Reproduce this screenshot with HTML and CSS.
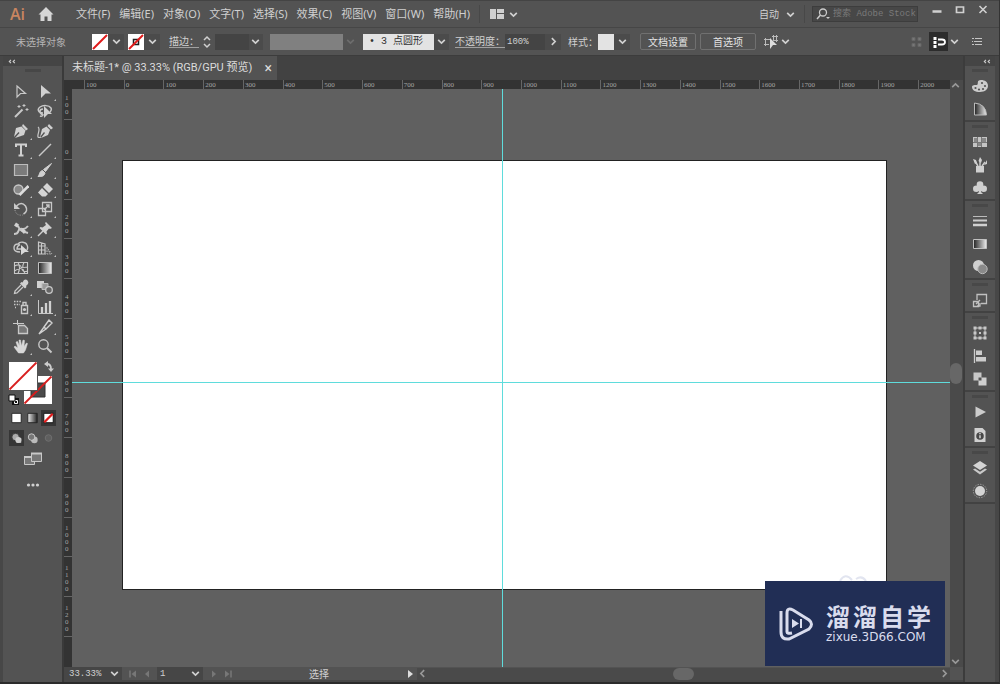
FILE: index.html
```
<!DOCTYPE html>
<html lang="zh-CN">
<head>
  <meta charset="UTF-8">
  <meta name="viewport" content="width=device-width, initial-scale=1.0">
  <title>未标题-1</title>
  <link rel="stylesheet" href="styles.css">
</head>
<body>
  <svg class="defs" aria-hidden="true">
    <symbol id="chev" viewBox="0 0 10 10"><path d="M2 3.500l3 3 3-3" fill="none" stroke="currentColor" stroke-width="1.500"/></symbol>
    <symbol id="chev-r" viewBox="0 0 10 10"><path d="M3.500 2l3 3-3 3" fill="none" stroke="currentColor" stroke-width="1.500"/></symbol>
    <symbol id="chev-l" viewBox="0 0 10 10"><path d="M6.500 2l-3 3 3 3" fill="none" stroke="currentColor" stroke-width="1.500"/></symbol>
    <symbol id="chev-u" viewBox="0 0 10 10"><path d="M2 6.500l3-3 3 3" fill="none" stroke="currentColor" stroke-width="1.500"/></symbol>
    <symbol id="collapse" viewBox="0 0 10 10"><path d="M4.500 3.500L3 5l1.500 1.500M8 3.500L6.500 5 8 6.500" fill="none" stroke="currentColor"/></symbol>
    <linearGradient id="fade"><stop offset="0" stop-color="#222"/><stop offset="1" stop-color="#eee"/></linearGradient>
    <linearGradient id="fade-back"><stop offset="0" stop-color="#eee"/><stop offset="1" stop-color="#222"/></linearGradient>
  </svg>

  <header class="menubar">
    <span class="logo">Ai</span>
    <button class="home" aria-label="主页"><svg viewBox="0 0 16 16"><path d="M8 1L.5 8.500h2V15h4v-4.500h3V15h4V8.500h2z" fill="#d6d6d6"/></svg></button>
    <nav class="menus">
      <button>文件(F)</button>
      <button>编辑(E)</button>
      <button>对象(O)</button>
      <button>文字(T)</button>
      <button>选择(S)</button>
      <button>效果(C)</button>
      <button>视图(V)</button>
      <button>窗口(W)</button>
      <button>帮助(H)</button>
    </nav>
    <button class="layout" aria-label="排列文档"><svg viewBox="0 0 16 10" class="layout-icon"><path d="M1 0h6v10H1zM8 0h7v4H8zM8 5h7v5H8z" fill="#d0d0d0"/></svg><svg class="chev"><use href="#chev"/></svg></button>
    <div class="menubar-right">
      <button class="workspace">自动 <svg class="chev"><use href="#chev"/></svg></button>
      <label class="search">
        <svg viewBox="0 0 16 12"><circle cx="8" cy="4.500" r="3.500" fill="none" stroke="#ccc" stroke-width="1.300"/><path d="M5.500 7L2 11" stroke="#ccc" stroke-width="1.500"/><path d="M11 9h4l-2 2z" fill="#ccc"/></svg>
        <input type="text" placeholder="搜索 Adobe Stock" aria-label="搜索 Adobe Stock">
      </label>
      <div class="window-buttons">
        <button aria-label="最小化"><svg viewBox="0 0 12 12"><path d="M1.500 7.500h9" stroke="#d0d0d0" stroke-width="2.500"/></svg></button>
        <button aria-label="最大化"><svg viewBox="0 0 12 12"><path d="M2.500 3h7v5.500h-7z" fill="none" stroke="#d0d0d0" stroke-width="1.700"/></svg></button>
        <button aria-label="关闭"><svg viewBox="0 0 12 12"><path d="M2.500 2l7 7M9.500 2l-7 7" stroke="#d0d0d0" stroke-width="1.600"/></svg></button>
      </div>
    </div>
  </header>

  <div class="controlbar">
    <span class="selection">未选择对象</span>
    <button class="swatch" aria-label="填色"><svg viewBox="0 0 16 16"><path d="M0 0h16v16H0z" fill="#fff"/><path d="M1 15L15 1" stroke="#e01b1b" stroke-width="2"/></svg></button>
    <button class="drop" aria-label="填色选项"><svg class="chev"><use href="#chev"/></svg></button>
    <button class="swatch" aria-label="描边颜色"><svg viewBox="0 0 16 16"><path d="M0 0h16v16H0z" fill="#fff"/><path d="M5.500 5.500h5v5h-5z" fill="none" stroke="#222" stroke-width="1.500"/><path d="M1 15L15 1" stroke="#e01b1b" stroke-width="2"/></svg></button>
    <button class="drop" aria-label="描边颜色选项"><svg class="chev"><use href="#chev"/></svg></button>
    <label class="caption underlined" for="stroke">描边：</label>
    <button class="spinner" aria-label="调整描边粗细"><svg viewBox="0 0 10 14"><path d="M2 5l3-3 3 3M2 9l3 3 3-3" fill="none" stroke="currentColor" stroke-width="1.500"/></svg></button>
    <span class="combo stroke"><select id="stroke"><option></option></select><svg class="chev"><use href="#chev"/></svg></span>
    <span class="combo profile"><select aria-label="变量宽度配置文件" disabled><option></option></select><svg class="chev"><use href="#chev"/></svg></span>
    <span class="combo brush"><select aria-label="画笔定义"><option>•&nbsp;3 点圆形</option></select><svg class="chev"><use href="#chev"/></svg></span>
    <label class="caption underlined" for="opacity">不透明度：</label>
    <input type="text" class="opacity" id="opacity" value="100%">
    <button class="drop" aria-label="不透明度选项"><svg class="chev"><use href="#chev-r"/></svg></button>
    <span class="caption">样式：</span>
    <button class="swatch style" aria-label="图形样式"></button>
    <button class="drop" aria-label="样式选项"><svg class="chev"><use href="#chev"/></svg></button>
    <button class="outlined">文档设置</button>
    <button class="outlined">首选项</button>
    <button class="similar" aria-label="选择类似的对象"><svg viewBox="0 0 16 16"><path d="M1 5.500h6M1 10.500h5M2.500 4v8M9 2.500h6M10 6.500h5M10.500 1v6M13.500 1v7" stroke="#bbb" fill="none"/><path d="M7 4l7 7h-4l-3 4z" fill="#ddd"/></svg><svg class="chev"><use href="#chev"/></svg></button>
    <div class="controlbar-right">
      <svg class="dots" viewBox="0 0 12 12"><path d="M1 1.500h3v3H1zM7 1.500h3v3H7zM1 7.500h3v3H1zM7 7.500h3v3H7z" fill="#777" stroke="#666"/></svg>
      <button class="snap" aria-label="对齐"><svg viewBox="0 0 18 18"><path d="M5 4v11" stroke="#fff" stroke-width="3" stroke-dasharray="3 1"/><path d="M8 6.500h4q3 0 3 2.500t-3 2.500H8" fill="none" stroke="#fff" stroke-width="1.800"/></svg></button>
      <button class="drop" aria-label="对齐选项"><svg class="chev"><use href="#chev"/></svg></button>
      <button class="list" aria-label="面板菜单"><svg viewBox="0 0 12 10"><path d="M1 1.500h2M4 1.500h7M1 4.500h1M3 4.500h8M1 7.500h2M4 7.500h7" stroke="#c5c5c5" stroke-width="1.200"/></svg></button>
    </div>
  </div>

  <main class="workspace-area">
    <aside class="tools">
      <div class="panel-head"><svg class="chev"><use href="#collapse"/></svg></div>
      <div class="grip"></div>
      <div class="tool-grid">
        <button aria-label="选择工具"><svg viewBox="0 0 16 16"><path d="M4 2l8.500 7.500H7.500L4 13z" fill="none" stroke="#c8c8c8" stroke-width="1.200"/></svg></button>
        <button class="more" aria-label="直接选择工具"><svg viewBox="0 0 16 16"><path d="M4 1l10 8.500H8.500L4 14z" fill="#d0d0d0"/></svg></button>
        <button aria-label="魔棒工具"><svg viewBox="0 0 16 16"><path d="M2 14l7.500-7.500" stroke="#c8c8c8" stroke-width="2"/><path d="M11 1v3M9.500 2.500h3M14 5v3M12.500 6.500h3M6 2v3M4.500 3.500h3" stroke="#c8c8c8"/></svg></button>
        <button aria-label="套索工具"><svg viewBox="0 0 16 16"><path d="M6 10C1 10 0 6 3 4s9-2 11 1c1 2 0 3-1 4M6 6q-3 0-3 2.500T6 12q-1 2-3 1" fill="none" stroke="#c8c8c8" stroke-width="1.500"/><path d="M7 3l8 8h-4l-4 4z" fill="#d0d0d0"/></svg></button>
        <button class="more" aria-label="钢笔工具"><svg viewBox="0 0 16 16"><path d="M10 1l5 5-2 1.500L9 3zM8.500 3.500l4 4L11 12l-9 3 4.500-5L5.500 9 1 14l2-9z" fill="#d0d0d0"/></svg></button>
        <button aria-label="曲率工具"><svg viewBox="0 0 16 16"><path d="M12 1l4 4-2 1.500-3.500-3.500zM9.500 3.500l3.500 3.500-2 5L4 15l4-5-1-1-4 5 2-8z" fill="#d0d0d0"/><path d="M1 4c3 2-1 7 0 10q1 1 3 0" fill="none" stroke="#c8c8c8" stroke-width="1.200"/></svg></button>
        <button class="more" aria-label="文字工具"><svg viewBox="0 0 16 16"><path d="M3 5V2.500h10V5M8 2.500v11M5.500 13.500h5" fill="none" stroke="#d0d0d0" stroke-width="2"/></svg></button>
        <button class="more" aria-label="直线段工具"><svg viewBox="0 0 16 16"><path d="M2 14L14 2" stroke="#c8c8c8" stroke-width="1.500"/></svg></button>
        <button class="more" aria-label="矩形工具"><svg viewBox="0 0 16 16"><path d="M1.500 2.500h13v11h-13z" fill="#7b7b7b" stroke="#bcbcbc" stroke-width="1.200"/></svg></button>
        <button class="more" aria-label="画笔工具"><svg viewBox="0 0 16 16"><path d="M14.500 1.500l-6 8-2-2zM5.500 8.500l2.500 2.500c-1 4-4 3.500-7 3.500 2-2 1-5 4.500-6z" fill="#d0d0d0" stroke="#d0d0d0"/></svg></button>
        <button class="more" aria-label="Shaper 工具"><svg viewBox="0 0 16 16"><circle cx="5.500" cy="7.500" r="4.500" fill="#888" stroke="#c8c8c8" stroke-width="1.300"/><path d="M6.500 13L15.500 4" stroke="#ddd" stroke-width="2.600"/></svg></button>
        <button class="more" aria-label="橡皮擦工具"><svg viewBox="0 0 16 16"><path d="M10 1l6 6-4 4-6-6zM5 6l6 6-2.500 2.500H5L1 10.500z" fill="#d4d4d4"/></svg></button>
        <button class="more" aria-label="旋转工具"><svg viewBox="0 0 16 16"><path d="M3.500 5q5-5 9 0 3 5-2 8" fill="none" stroke="#c8c8c8" stroke-width="1.500"/><path d="M1 2v6h6z" fill="#c8c8c8"/><path d="M2 9q1 6 8 5" fill="none" stroke="#aaa" stroke-dasharray="1 1.500"/></svg></button>
        <button class="more" aria-label="比例缩放工具"><svg viewBox="0 0 16 16"><path d="M5.500 1.500h9v9h-9zM1.500 7.500h7v7h-7z" fill="none" stroke="#c8c8c8" stroke-width="1.300"/><path d="M7 9l5-5M9 4h3v3" fill="none" stroke="#c8c8c8" stroke-width="1.300"/></svg></button>
        <button class="more" aria-label="宽度工具"><svg viewBox="0 0 16 16"><path d="M1 13c6 0 3-4 6-5s4 2 8-3M2 4q3 0 4 3t9 5" fill="none" stroke="#c8c8c8" stroke-width="2"/><path d="M3 1.500l3 2-2 3-3-2zM10 7l3 3-2 3-3-3z" fill="#d0d0d0"/></svg></button>
        <button class="more" aria-label="操控变形工具"><svg viewBox="0 0 16 16"><path d="M9 1l6 6-2 1-1-.500-2.500 3 .500 2-1 1L2.500 7l1-1 2 .500L9 4 8 2z" fill="#d0d0d0"/><path d="M6 10l-5 5" stroke="#d0d0d0" stroke-width="1.500"/></svg></button>
        <button class="more" aria-label="形状生成器工具"><svg viewBox="0 0 16 16"><path d="M5 4C2 4 1 6 1 8s2 4 6 4M5 4c2-3 8-2 9 1 1 2 1 3 0 5M7 4.500C4 6 4 8 4 9h4" fill="none" stroke="#c8c8c8" stroke-width="1.400"/><path d="M8 5l8 7h-4l-4 3z" fill="#d8d8d8"/></svg></button>
        <button class="more" aria-label="透视网格工具"><svg viewBox="0 0 16 16"><path d="M1.500 2v12H8V4zM4.500 3v11M1.500 6H8M1.500 10H8" fill="none" stroke="#c8c8c8" stroke-width="1.200"/><path d="M8 5l7 9H8M10 8v6M12.500 11v3M8 11h5" fill="none" stroke="#aaa" stroke-dasharray="1.500 1"/></svg></button>
        <button aria-label="网格工具"><svg viewBox="0 0 16 16"><path d="M1.500 2.500h13v11h-13zM1.500 6q6-3 7 2t6 3M5 2.500q3 5 0 11M11 2.500q-3 5 1 11M1.500 11q4-3 13-4" fill="none" stroke="#c8c8c8" stroke-width="1.100"/></svg></button>
        <button aria-label="渐变工具"><svg viewBox="0 0 16 16"><path d="M1.500 2.500h13v11h-13z" fill="url(#fade)" stroke="#c0c0c0"/></svg></button>
        <button class="more" aria-label="吸管工具"><svg viewBox="0 0 16 16"><path d="M11 1q2-1 3.500.500T15 5l-2 2 .500 1-1.500 1.500-5-5L8.500 3l1 .500z" fill="#d0d0d0"/><path d="M8 6L2 12l-.500 2.500L4 14l6-6" fill="none" stroke="#c8c8c8" stroke-width="1.300"/></svg></button>
        <button aria-label="混合工具"><svg viewBox="0 0 16 16"><path d="M0 2h7v7H0z" fill="#d0d0d0"/><path d="M5 4.500h6v6H5z" fill="#999" stroke="#bbb"/><circle cx="12" cy="11" r="3.300" fill="#666" stroke="#c8c8c8" stroke-width="1.300"/></svg></button>
        <button class="more" aria-label="符号喷枪工具"><svg viewBox="0 0 16 16"><path d="M8.500 6.500h6v8h-6zM10 3.500h3v3h-3z" fill="none" stroke="#c8c8c8" stroke-width="1.400"/><circle cx="11.500" cy="10.500" r="1.600" fill="#ccc"/><path d="M1 2.500h7M1 5.500h6M2 8.500h1" stroke="#c8c8c8" stroke-dasharray="1.500 1.200" stroke-width="1.500"/></svg></button>
        <button class="more" aria-label="柱形图工具"><svg viewBox="0 0 16 16"><path d="M1.500 1v13.500H16" fill="none" stroke="#c8c8c8"/><path d="M5 8v6M9 4v10M13 2v12" stroke="#d0d0d0" stroke-width="2.300"/></svg></button>
        <button aria-label="画板工具"><svg viewBox="0 0 16 16"><path d="M0 4.500h11M4.500 1v5" stroke="#c8c8c8"/><path d="M5.500 6.500h6l3 3v5h-9z" fill="#777" stroke="#c8c8c8" stroke-width="1.300"/></svg></button>
        <button class="more" aria-label="切片工具"><svg viewBox="0 0 16 16"><path d="M12 1l3 3-6 6-2-2zM7 8l2 2-7 5z" fill="none" stroke="#d0d0d0" stroke-width="1.400"/></svg></button>
        <button class="more" aria-label="抓手工具"><svg viewBox="0 0 16 16"><path d="M5.500 15L1 9l1-1 3 2-2-6 1.500-.500L6.500 8 6 2h1.500l1 6L10 2l1.500.500L11 8.500 13.500 5l1 .500L12.500 12l-2 3z" fill="#d8d8d8" stroke="#d8d8d8" stroke-width=".500"/></svg></button>
        <button aria-label="缩放工具"><svg viewBox="0 0 16 16"><circle cx="6.500" cy="6.500" r="4.700" fill="none" stroke="#c8c8c8" stroke-width="1.400"/><path d="M10 10l4.500 4.500" stroke="#c8c8c8" stroke-width="2"/></svg></button>
      </div>
      <button class="fill-stroke" aria-label="填色和描边">
        <svg viewBox="0 0 48 48">
          <path d="M16 18h28v28H16z" fill="#fff"/><path d="M23 25h14v14H23z" fill="#4a4a4a" stroke="#333"/>
          <path d="M16.500 45.500l27-27" stroke="#d81e1e" stroke-width="1.800"/>
          <path d="M0 3h30v30H0z" fill="#535353"/><path d="M1 4h28v28H1z" fill="#fff"/><path d="M1.500 31.500l27-27" stroke="#d81e1e" stroke-width="1.800"/>
          <path d="M39 6q4 0 4 5" fill="none" stroke="#ccc" stroke-width="1.800"/><path d="M36 6l4-3v6zM40 10.500h6l-3 3.500z" fill="#ccc"/>
          <path d="M4 40h7v7H4z" fill="#111"/><path d="M6.500 42.500h3v3h-3z" fill="none" stroke="#fff"/><path d="M1 37h6v6H1z" fill="#fff" stroke="#111"/>
        </svg>
      </button>
      <div class="tool-row">
        <button aria-label="颜色"><svg viewBox="0 0 16 16"><path d="M3 3h10v10H3z" fill="#fff" stroke="#222"/></svg></button>
        <button aria-label="渐变"><svg viewBox="0 0 16 16"><path d="M3 3h10v10H3z" fill="url(#fade-back)" stroke="#222"/></svg></button>
        <button class="on" aria-label="无"><svg viewBox="0 0 16 16"><path d="M3 3h10v10H3z" fill="#fff" stroke="#111"/><path d="M3.500 12.500l9-9" stroke="#e01b1b" stroke-width="2.500"/></svg></button>
      </div>
      <div class="tool-row modes">
        <button class="on" aria-label="正常绘图"><svg viewBox="0 0 16 16"><path d="M8 8h5v5H8z" fill="#ddd"/><circle cx="7" cy="7" r="4" fill="#aaa" stroke="#333"/><circle cx="10" cy="10" r="3.200" fill="#ccc"/></svg></button>
        <button aria-label="背面绘图"><svg viewBox="0 0 16 16"><circle cx="10" cy="10" r="3.500" fill="#bbb"/><circle cx="7" cy="7" r="3.500" fill="#777" stroke="#ccc"/></svg></button>
        <button aria-label="内部绘图" disabled><svg viewBox="0 0 16 16"><circle cx="8" cy="8" r="3.500" fill="#5f5f5f" stroke="#707070"/></svg></button>
      </div>
      <button class="screen-mode" aria-label="更改屏幕模式"><svg viewBox="0 0 20 16"><path d="M1.500 5.500h10v8h-10z" fill="#777" stroke="#c8c8c8"/><path d="M1 5h11v2H1z" fill="#c8c8c8"/><path d="M8.500 2.500h10v8h-10z" fill="#777" stroke="#c8c8c8"/><path d="M8 1.500h11v2H8z" fill="#c8c8c8"/></svg></button>
      <button class="edit-toolbar" aria-label="编辑工具栏"><svg viewBox="0 0 20 8"><g fill="#d0d0d0"><circle cx="5.500" cy="4" r="1.600"/><circle cx="10" cy="4" r="1.600"/><circle cx="14.500" cy="4" r="1.600"/></g></svg></button>
    </aside>

    <section class="document">
      <div class="tabs">
        <div class="tab"><span>未标题-1* @ 33.33% (RGB/GPU 预览)</span><button aria-label="关闭文档">×</button></div>
      </div>
      <div class="view">
        <div class="corner"></div>
        <div class="ruler-x" id="rulerX"></div>
        <div class="ruler-y" id="rulerY"></div>
        <div class="canvas">
          <div class="artboard"></div>
          <div class="guide guide-x"></div>
          <div class="guide guide-y"></div>
          <svg class="cloud" viewBox="0 0 36 6"><path d="M3 6q5-9 12-1M19 4q6-4 10 2" fill="none" stroke="#e2e5f0" stroke-width="2"/></svg>
          <div class="watermark">
            <svg viewBox="0 0 36 38"><path d="M2 6v21q0 8 8 7l20-10q5-5 0-9L14 5Q8 2 8 8v19q0 2 5 1" fill="none" stroke="#d9dced" stroke-width="3"/><path d="M13 14v9l7-4.500zM21 14h2v9h-2z" fill="#d9dced"/></svg>
            <div class="brand">
              <div class="brand-name"><b>溜</b><b>溜</b><b>自</b><b>学</b></div>
              <div class="brand-url">zixue.3D66.COM</div>
            </div>
          </div>
        </div>
        <div class="scroll-y">
          <svg class="chev"><use href="#chev-u"/></svg>
          <div class="thumb"></div>
          <svg class="chev"><use href="#chev"/></svg>
        </div>
      </div>
      <footer class="statusbar">
        <span class="combo zoom"><select aria-label="缩放级别"><option>33.33%</option></select><svg class="chev"><use href="#chev"/></svg></span>
        <button class="step" aria-label="首项" disabled><svg viewBox="0 0 10 10"><path d="M2 1.500v7" stroke="#777" stroke-width="1.500"/><path d="M8 1.500v7L3.500 5z" fill="#777"/></svg></button>
        <button class="step" aria-label="上一项" disabled><svg viewBox="0 0 10 10"><path d="M7 1.500v7L3 5z" fill="#777"/></svg></button>
        <span class="combo page"><select aria-label="画板"><option>1</option></select><svg class="chev"><use href="#chev"/></svg></span>
        <button class="step" aria-label="下一项" disabled><svg viewBox="0 0 10 10"><path d="M3 1.500v7L7 5z" fill="#777"/></svg></button>
        <button class="step" aria-label="末项" disabled><svg viewBox="0 0 10 10"><path d="M8 1.500v7" stroke="#777" stroke-width="1.500"/><path d="M2 1.500v7L6.500 5z" fill="#777"/></svg></button>
        <span class="status-text">选择</span>
        <button class="step" aria-label="状态栏选项"><svg viewBox="0 0 10 10"><path d="M3 1v8l5-4z" fill="#ddd"/></svg></button>
        <div class="scroll-x">
          <svg class="chev"><use href="#chev-l"/></svg>
          <div class="thumb"></div>
          <svg class="chev"><use href="#chev-r"/></svg>
        </div>
      </footer>
    </section>

    <aside class="panels">
      <div class="panel-head"><svg class="chev"><use href="#collapse"/></svg></div>
      <div class="group">
        <button aria-label="颜色"><svg viewBox="0 0 16 16"><path d="M9 2c4 0 7 2 7 6 0 3-3 6-8 6s-8-2-8-5c0-2 3-2 5-2 2-1-1-5 4-5z" fill="#ccc"/><g fill="#535353"><circle cx="10" cy="5" r="1.100"/><circle cx="13" cy="8" r="1.100"/><circle cx="11" cy="11" r="1.100"/><circle cx="7" cy="11.500" r="1.100"/><circle cx="3.500" cy="10" r="1.100"/></g></svg></button>
        <button aria-label="颜色参考"><svg viewBox="0 0 16 16"><path d="M2.500 2Q14 3 14.500 14h-12z" fill="url(#fade)" stroke="#bbb"/></svg></button>
      </div>
      <div class="group">
        <button aria-label="色板"><svg viewBox="0 0 16 16"><path d="M1 3h14v10H1z" fill="#c4c4c4"/><path d="M2 4h3v4H2zM10 4h4v4h-4zM6 9h3v3H6z" fill="#888"/><path d="M5.500 3v10M9.500 3v10M1 8.500h14" stroke="#777"/></svg></button>
        <button aria-label="画笔"><svg viewBox="0 0 16 16"><path d="M4 9h8v6.500H4z" fill="#d0d0d0"/><path d="M6 9L3 4M8 9V4M10 9l3-4" stroke="#ccc" stroke-width="1.500"/><path d="M1 2l3 1 1 3-2 1zM6.500 4L8 0l2 3-1 3zM15 3v4l-3 1z" fill="#d0d0d0"/></svg></button>
        <button aria-label="符号"><svg viewBox="0 0 16 16"><g fill="#d0d0d0"><circle cx="8" cy="4.500" r="3.300"/><circle cx="4.300" cy="8.800" r="3.300"/><circle cx="11.700" cy="8.800" r="3.300"/><path d="M7 7h2v5l2 2H5l2-2z"/></g></svg></button>
      </div>
      <div class="group">
        <button aria-label="描边"><svg viewBox="0 0 16 16"><path d="M1 3.500h14" stroke="#bbb"/><path d="M1 7.500h14" stroke="#ccc" stroke-width="2"/><path d="M1 12h14" stroke="#d0d0d0" stroke-width="2.500"/></svg></button>
        <button aria-label="渐变"><svg viewBox="0 0 16 16"><path d="M1.500 3.500h13v9h-13z" fill="url(#fade)" stroke="#c0c0c0"/></svg></button>
        <button aria-label="透明度"><svg viewBox="0 0 16 16"><circle cx="6.500" cy="6.500" r="5.500" fill="#d0d0d0"/><circle cx="10.500" cy="10" r="4.700" fill="#8a8a8a" stroke="#bbb"/></svg></button>
      </div>
      <div class="group">
        <button aria-label="资源导出"><svg viewBox="0 0 16 16"><path d="M5 8V2.500h9.500v9H9" fill="none" stroke="#c0c0c0" stroke-width="1.300"/><path d="M1.500 9.500h5v5h-5zM4 12l4-4M8 11v3H5" fill="none" stroke="#c0c0c0" stroke-width="1.300"/></svg></button>
      </div>
      <div class="group">
        <button aria-label="变换"><svg viewBox="0 0 16 16"><path d="M3 3h10v10H3z" fill="none" stroke="#c0c0c0"/><path d="M1.500 1.500h3v3h-3zM6.500 1.500h3v3h-3zM11.500 1.500h3v3h-3zM1.500 6.500h3v3h-3zM11.500 6.500h3v3h-3zM1.500 11.500h3v3h-3zM6.500 11.500h3v3h-3zM11.500 11.500h3v3h-3zM7 7h2v2H7z" fill="#c8c8c8"/></svg></button>
        <button aria-label="对齐"><svg viewBox="0 0 16 16"><path d="M2.500 1v14" stroke="#ccc" stroke-width="1.300"/><path d="M4 2.500h6v4.500H4zM4 9h10v4.500H4z" fill="#ccc"/></svg></button>
        <button aria-label="路径查找器"><svg viewBox="0 0 16 16"><path d="M1.500 1.500h8v8h-8z" fill="#c8c8c8"/><path d="M6.500 6.500h8v8h-8z" fill="#d0d0d0"/><path d="M6.500 6.500h3v3h-3z" fill="#535353"/></svg></button>
      </div>
      <div class="group">
        <button aria-label="动作"><svg viewBox="0 0 16 16"><path d="M3.500 2.500v11L14 8z" fill="#ccc"/></svg></button>
        <button aria-label="文档信息"><svg viewBox="0 0 16 16"><path d="M2.500 1h8l3 3v11h-11z" fill="#d0d0d0"/><circle cx="8" cy="9" r="3.800" fill="#484848"/><path d="M8 6v1.300M8 8.300v3" stroke="#ddd" stroke-width="1.400"/></svg></button>
      </div>
      <div class="group">
        <button aria-label="图层"><svg viewBox="0 0 16 16"><path d="M8 1l7 4.500L8 10 1 5.500z" fill="#d4d4d4"/><path d="M1 9.500l2-1 5 3.200 5-3.200 2 1L8 14.500z" fill="#c8c8c8"/></svg></button>
        <button aria-label="外观"><svg viewBox="0 0 16 16"><circle cx="8" cy="8" r="5" fill="#d4d4d4"/><circle cx="8" cy="8" r="6.700" fill="none" stroke="#aaa" stroke-dasharray="1.200 1.430"/></svg></button>
      </div>
    </aside>
  </main>

  <script>
    const rulerX = document.getElementById('rulerX');
    const rulerY = document.getElementById('rulerY');

    const addMark = (ruler, value) => {
      const mark = document.createElement('span');
      mark.textContent = value;
      ruler.appendChild(mark);
    };

    addMark(rulerX, '');
    for (let v = -100; v <= 2000; v += 100) {
      addMark(rulerX, Math.abs(v));
    }

    for (let v = -100; v <= 1200; v += 100) {
      addMark(rulerY, Math.abs(v));
    }
    addMark(rulerY, '');
  </script>
</body>
</html>
```
FILE: styles.css
```
* {
  box-sizing: border-box;
}

body {
  display: flex;
  flex-direction: column;
  height: 100vh;
  margin: 0;
  overflow: hidden;
  font-family: "Noto Sans", "Noto Sans CJK SC", sans-serif;
  font-size: 10px;
  line-height: 14px;
  color: #d0d0d0;
  background: #535353;
  border-bottom: 2px solid #2b2b2b;
  border-right: 1px solid #333;
}

button,
input,
select {
  margin: 0;
  padding: 0;
  border: 0;
  font: inherit;
  color: inherit;
  background: none;
  appearance: none;
}

button {
  display: flex;
  align-items: center;
  justify-content: center;
}

.defs {
  position: absolute;
  width: 0;
  height: 0;
}

.chev {
  flex: none;
  width: 11px;
  height: 11px;
}

/* menu bar */
.menubar {
  flex: none;
  display: flex;
  align-items: center;
  height: 28px;
  padding-left: 10px;
  border-top: 1px solid #444;
  border-bottom: 1px solid #464646;
}

.logo {
  width: 28px;
  font-family: "Open Sans", sans-serif;
  font-size: 16px;
  font-weight: 600;
  color: #c98560;
}

.home {
  width: 16px;
  height: 16px;
}

.menus {
  display: flex;
  margin-left: 22px;
  gap: 9px;
  font-size: 11px;
}

.menus button,
.workspace {
  white-space: nowrap;
}

.layout {
  gap: 3px;
  height: 18px;
  margin-left: 9px;
  padding-left: 9px;
  border-left: 1px solid #484848;
}

.layout-icon {
  width: 16px;
  height: 10px;
}

.menubar-right {
  display: flex;
  align-items: center;
  margin-left: auto;
}

.workspace {
  gap: 6px;
  height: 18px;
  padding-right: 8px;
  border-right: 1px solid #484848;
}

.search {
  display: flex;
  align-items: center;
  width: 106px;
  height: 16px;
  margin-left: 7px;
  padding-left: 2px;
  background: #474747;
  border: 1px solid #3d3d3d;
}

.search svg {
  flex: none;
  width: 16px;
  height: 12px;
}

.search input {
  width: 100%;
  min-width: 0;
  padding-left: 2px;
  font-family: "Liberation Mono", "Noto Sans CJK SC", monospace;
  font-size: 9px;
}

.search input::placeholder {
  color: #7a7a7a;
}

.window-buttons {
  display: flex;
  gap: 11px;
  margin: 0 10px 8px 13px;
}

.window-buttons button,
.window-buttons svg {
  width: 12px;
  height: 12px;
}

/* control bar */
.controlbar {
  flex: none;
  display: flex;
  align-items: center;
  height: 28px;
  padding-left: 16px;
  border-bottom: 1px solid #3c3c3c;
}

.selection {
  width: 76px;
  color: #b5b5b5;
}

.swatch {
  width: 16px;
  height: 16px;
}

.swatch.style {
  background: #e3e3e3;
}

.drop {
  width: 16px;
  height: 16px;
  margin-right: 4px;
  background: #4b4b4b;
}

.caption {
  margin-left: 3px;
  white-space: nowrap;
}

.underlined {
  border-bottom: 1px solid #a0a0a0;
  margin-left: 5px;
  line-height: 12px;
}

.drop + .underlined {
  margin-left: 5px;
}

.spinner {
  width: 16px;
  height: 16px;
}

.spinner svg {
  width: 10px;
  height: 14px;
}

.combo {
  position: relative;
  display: flex;
  align-items: center;
}

.combo select {
  width: 100%;
  height: 16px;
}

.combo .chev {
  position: absolute;
  right: 2px;
  pointer-events: none;
}

.stroke {
  width: 48px;
  background: linear-gradient(to right, #444 34px, #4b4b4b 34px);
}

.profile {
  width: 88px;
  margin-left: 7px;
  color: #6d6d6d;
  background: linear-gradient(to right, #808080 73px, #535353 73px);
}

.brush {
  width: 86px;
  margin-left: 5px;
  background: linear-gradient(to right, #e3e3e3 71px, #4b4b4b 71px);
}

.brush select {
  padding-left: 6px;
  color: #333;
}

.brush select,
.statusbar select,
.opacity {
  font-family: "Liberation Mono", "Noto Sans CJK SC", monospace;
}

.brush + .underlined {
  margin-left: 6px;
}

.opacity {
  width: 40px;
  height: 16px;
  padding-left: 2px;
  font-size: 9px;
  background: #444;
}

.outlined {
  width: 56px;
  height: 17px;
  margin-left: 4px;
  color: #e4e4e4;
  border: 1px solid #707070;
  border-radius: 2px;
}

.drop + .outlined {
  margin-left: 6px;
}

.similar {
  gap: 1px;
  margin-left: 7px;
}

.similar svg:first-child {
  width: 16px;
  height: 16px;
}

.controlbar-right {
  display: flex;
  align-items: center;
  margin-left: auto;
  padding-right: 16px;
}

.controlbar-right .drop {
  width: 12px;
  background: none;
}

.dots {
  width: 12px;
  height: 12px;
  margin-right: 6px;
}

.snap {
  width: 19px;
  height: 19px;
  background: #2c2c2c;
}

.snap svg {
  width: 18px;
  height: 18px;
}

.list {
  width: 12px;
  height: 10px;
  margin-left: 7px;
}

/* work area */
.workspace-area {
  flex: 1;
  display: flex;
  min-height: 0;
}

.panel-head {
  flex: none;
  display: flex;
  align-items: center;
  height: 10px;
  padding: 0 3px;
  background: #454545;
}

.tools {
  flex: none;
  display: flex;
  flex-direction: column;
  width: 64px;
  border-left: 3px solid #474747;
  border-right: 2px solid #3a3a3a;
}

.grip {
  width: 16px;
  height: 3px;
  margin: 3px auto 0;
  background: #474747;
}

.tool-grid {
  display: grid;
  grid-template-columns: 24px 24px;
  grid-template-rows: repeat(14, 1fr);
  height: 274px;
  margin: 10px 0 0 6px;
}

.tool-grid button {
  position: relative;
}

.tool-grid svg {
  width: 16px;
  height: 16px;
}

/* small triangle: more tools behind this one */
.tool-grid .more::after {
  content: "";
  position: absolute;
  right: 1px;
  bottom: 1px;
  border: 1px solid #c0c0c0;
  border-top-color: transparent;
  border-left-color: transparent;
}

.fill-stroke {
  width: 48px;
  height: 48px;
  margin: 2px 0 0 5px;
}

.fill-stroke svg {
  width: 48px;
  height: 48px;
}

.tool-row {
  display: flex;
  gap: 1px;
  margin: 4px 0 0 6px;
}

.tool-row button {
  width: 15px;
  height: 16px;
}

.tool-row svg {
  width: 15px;
  height: 16px;
}

.tool-row .on {
  background: #363636;
}

.screen-mode {
  margin-top: 5px;
  height: 16px;
}

.screen-mode svg {
  width: 20px;
  height: 16px;
}

.edit-toolbar {
  margin-top: 14px;
}

.edit-toolbar svg {
  width: 20px;
  height: 8px;
}

.document {
  flex: 1;
  display: flex;
  flex-direction: column;
  min-width: 0;
}

.tabs {
  flex: none;
  display: flex;
  height: 24px;
  background: #424242;
}

.tab {
  display: flex;
  align-items: center;
  gap: 11px;
  padding: 0 4px 0 8px;
  background: #535353;
  font-family: Roboto, "Noto Sans CJK SC", sans-serif;
  font-size: 11px;
  color: #dcdcdc;
}

.tab button {
  width: 10px;
  font-size: 14px;
}

.view {
  flex: 1;
  display: grid;
  grid-template-columns: 8px 1fr 13px;
  grid-template-rows: 9px 1fr;
  min-height: 0;
}

.corner,
.ruler-x,
.ruler-y {
  background: #333;
}

.ruler-x,
.ruler-y {
  font-family: "Liberation Serif", serif;
  font-size: 7px;
  color: #a5a5a5;
  overflow: hidden;
}

.ruler-x {
  display: grid;
  grid-template-columns: 12px repeat(21, 10fr) 8fr;
}

.ruler-x span {
  min-width: 0;
  padding-left: 1px;
  line-height: 11px;
  border-left: 1px solid #666;
  background: repeating-linear-gradient(to right, transparent 0 9%, #4c4c4c 9% 10%) bottom / 100% 2px no-repeat;
}

.ruler-x span:first-child {
  border-left: 0;
}

.ruler-y {
  grid-row: 2;
  display: grid;
  grid-template-rows: 31px repeat(13, 1fr) 30px;
}

.ruler-y span {
  display: flex;
  align-items: flex-end;
  width: 8px;
  min-height: 0;
  padding: 0 3px 3px 1px;
  line-height: 7px;
  word-break: break-all;
  border-bottom: 1px solid #666;
}

.ruler-y span:last-child {
  border-bottom: 0;
}

.canvas {
  position: relative;
  grid-row: 2;
  grid-column: 2;
  overflow: hidden;
  background: #606060;
}

.artboard {
  position: absolute;
  left: 50px;
  right: 63px;
  top: 71px;
  bottom: 77px;
  background: #fff;
  border: 1px solid #222;
}

.guide {
  position: absolute;
  background: #5fdcdc;
}

.guide-x {
  left: 49%;
  top: 0;
  bottom: 0;
  width: 1px;
}

.guide-y {
  top: 293px;
  left: 0;
  right: 0;
  height: 1px;
}

.cloud {
  position: absolute;
  right: 77px;
  bottom: 86px;
  width: 36px;
  height: 6px;
}

.watermark {
  position: absolute;
  right: 5px;
  bottom: 1px;
  display: flex;
  align-items: center;
  gap: 11px;
  width: 180px;
  height: 85px;
  padding-left: 14px;
  color: #d9dced;
  background: #212e55;
}

.watermark svg {
  width: 36px;
  height: 38px;
}

.brand-name {
  display: flex;
  gap: 3px;
  font-size: 24px;
  line-height: 26px;
}

.brand-url {
  font-family: "DejaVu Sans", sans-serif;
  font-size: 12px;
  line-height: 14px;
}

.scroll-y {
  grid-row: 1 / 3;
  grid-column: 3;
  display: flex;
  flex-direction: column;
  justify-content: space-between;
  color: #999;
  background: #4a4a4a;
}

.thumb {
  background: #676767;
  border-radius: 6px;
}

.scroll-y .thumb {
  width: 12px;
  height: 21px;
}

.statusbar {
  flex: none;
  display: flex;
  align-items: center;
  height: 15px;
  padding-right: 13px;
  border-bottom: 2px solid #474747;
}

.statusbar .combo select {
  height: 13px;
  font-size: 9px;
}

.zoom {
  width: 58px;
  background: #464646;
}

.zoom select {
  padding-left: 5px;
}

.page {
  width: 46px;
  margin-left: 3px;
  background: #464646;
}

.page select {
  padding-left: 3px;
}

.step {
  width: 14px;
  height: 12px;
}

.zoom + .step,
.page + .step {
  margin-left: 4px;
}

.step svg {
  width: 10px;
  height: 10px;
}

.status-text {
  width: 168px;
  text-align: center;
}

.scroll-x {
  flex: 1;
  display: flex;
  align-items: center;
  justify-content: space-between;
  color: #999;
  background: #4a4a4a;
}

.scroll-x .thumb {
  width: 21px;
  height: 12px;
}

/* right panel dock */
.panels {
  flex: none;
  width: 36px;
  border-left: 2px solid #3c3c3c;
  border-right: 4px solid #474747;
}

.panels .panel-head {
  justify-content: flex-end;
}

.group {
  position: relative;
  padding-top: 8px;
  border-bottom: 2px solid #424242;
}

.group::before {
  content: "";
  position: absolute;
  top: 3px;
  left: 7px;
  right: 7px;
  height: 3px;
  background: #484848;
}

.group button {
  width: 100%;
  height: 23px;
}

.group svg {
  width: 16px;
  height: 16px;
}
```
